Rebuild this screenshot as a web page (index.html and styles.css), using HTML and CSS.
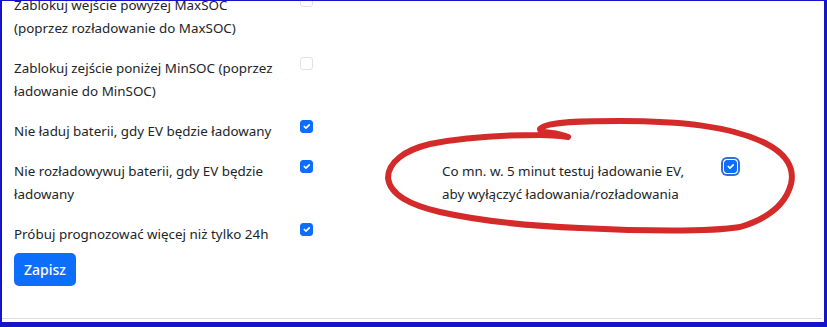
FILE: index.html
```
<!DOCTYPE html>
<html lang="pl">
<head>
  <meta charset="UTF-8">
  <title>Ustawienia baterii</title>
  <link rel="stylesheet" href="styles.css">
</head>
<body>
  <div class="frame">
    <form class="settings">
      <div class="options">
        <label class="option">
          <span class="option-text">Zablokuj wejście powyżej MaxSOC (poprzez rozładowanie do MaxSOC)</span>
          <input type="checkbox" class="check">
        </label>
        <label class="option">
          <span class="option-text">Zablokuj zejście poniżej MinSOC (poprzez ładowanie do MinSOC)</span>
          <input type="checkbox" class="check">
        </label>
        <label class="option">
          <span class="option-text">Nie ładuj baterii, gdy EV będzie ładowany</span>
          <input type="checkbox" class="check" checked>
        </label>
        <label class="option">
          <span class="option-text">Nie rozładowywuj baterii, gdy EV będzie ładowany</span>
          <input type="checkbox" class="check" checked>
        </label>
        <label class="option option-right">
          <span class="option-text">Co mn. w. 5 minut testuj ładowanie EV, aby wyłączyć ładowania/rozładowania</span>
          <input type="checkbox" class="check check-focus" checked>
        </label>
        <label class="option">
          <span class="option-text">Próbuj prognozować więcej niż tylko 24h</span>
          <input type="checkbox" class="check" checked>
        </label>
      </div>
      <button type="submit" class="btn">Zapisz</button>
    </form>

    <!-- odręczne zaznaczenie na zrzucie -->
    <svg class="scribble" width="827" height="327" viewBox="0 0 827 327">
      <path d="M568 137 C556 131 540 134 540 129 C545 122 575 121 620 121 C680 121 730 126 765 143 C785 153 795 167 791 184 C786 203 770 218 740 227 C710 232 640 231 580 228 C530 226 480 221 440 212 C410 205 390 195 388 178 C388 162 405 150 430 144 C460 138 500 135 540 135 C552 135 560 136 568 137"/>
    </svg>
  </div>
</body>
</html>
```

FILE: styles.css
```
* {
  box-sizing: border-box;
}

body {
  margin: 0;
  font-family: "Noto Sans", "Open Sans", sans-serif;
  color: #212529;
  background: #fff;
}

.frame {
  position: relative;
  width: 827px;
  height: 327px;
  overflow: hidden;
  border-style: solid;
  border-color: #1414c8;
  border-width: 1px 3px 5px 2px;
}

.settings {
  margin: -7px 2px 0 0;
  padding-left: 12px;
  height: 325px;
  border-bottom: 1px solid #dcdcdc;
}

.options {
  display: grid;
  grid-template-columns: 428px 300px;
  row-gap: 17px;
}

.option {
  grid-column: 1;
  display: flex;
  align-items: flex-start;
  font-size: 13.4px;
  line-height: 23px;
}

.option-text {
  width: 262px;
  margin-right: 24px;
}

.option-right {
  grid-column: 2;
  grid-row: 4;
}

.option-right .option-text {
  margin-right: 20px;
}

.check {
  appearance: none;
  margin: 0;
  width: 13px;
  height: 13px;
  border: 1px solid #dee2e6;
  border-radius: 3px;
  background: #fff;
  flex-shrink: 0;
}

.check:checked {
  background-color: #0d6efd;
  border-color: #0d6efd;
  background-image: url("data:image/svg+xml,%3csvg xmlns='http://www.w3.org/2000/svg' viewBox='0 0 20 20'%3e%3cpath fill='none' stroke='%23fff' stroke-linecap='round' stroke-linejoin='round' stroke-width='3' d='m6 10 3 3 6-6'/%3e%3c/svg%3e");
  background-size: 100% 100%;
}

.check-focus {
  box-shadow: 0 0 0 1px #fff, 0 0 0 3px #2f6fd6;
}

.btn {
  margin-top: 7px;
  padding: 0 10px;
  width: 62px;
  height: 33px;
  border: none;
  border-radius: 5px;
  background: #0d6efd;
  color: #fff;
  font-family: inherit;
  font-size: 14px;
  font-weight: 500;
}

.scribble {
  position: absolute;
  left: -2px;
  top: -1px;
  pointer-events: none;
}

.scribble path {
  fill: none;
  stroke: #d42a2a;
  stroke-width: 6;
  stroke-linecap: round;
  stroke-linejoin: round;
}
```
